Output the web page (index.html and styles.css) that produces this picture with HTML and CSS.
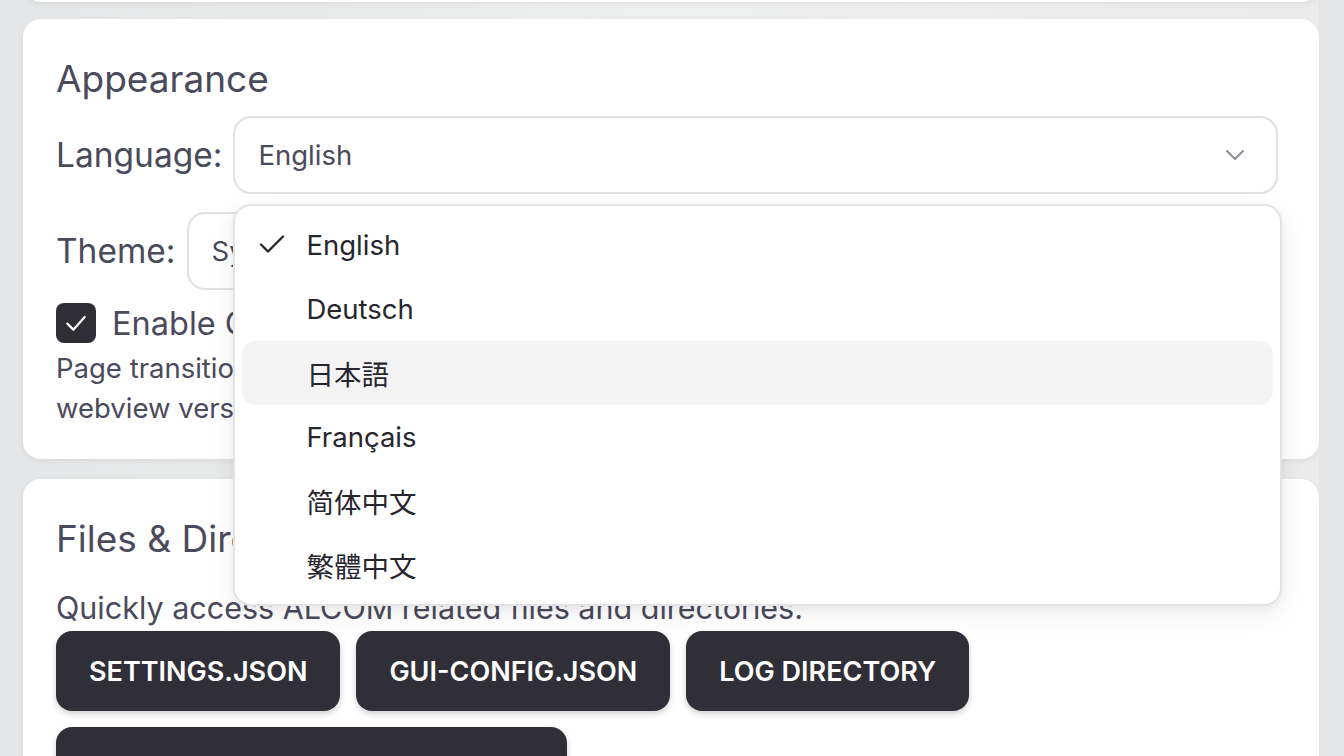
FILE: index.html
```html
<!DOCTYPE html>
<html lang="en">
<head>
<meta charset="utf-8">
<title>Settings</title>
<link rel="stylesheet" href="styles.css">
</head>
<body>
<div class="app">
  <main class="scroller">
    <div class="card card-prev"></div>

    <section class="card">
      <h2 class="card-title">Appearance</h2>

      <div class="field-row">
        <label class="field-label">Language:</label>
        <div class="select-wrap">
          <div class="select">
            <span class="select-value">English</span>
            <svg class="chevron" viewBox="0 0 20 12" width="20" height="12"><path d="M2 2 L10 10 L18 2" fill="none" stroke="currentColor" stroke-width="2" stroke-linecap="round" stroke-linejoin="round"/></svg>
          </div>
          <ul class="menu">
            <li class="menu-item selected">
              <svg class="check" viewBox="0 0 26 20" width="26" height="20"><path d="M2 10.5 L9 17.5 L24 2.5" fill="none" stroke="currentColor" stroke-width="2.4" stroke-linecap="round" stroke-linejoin="round"/></svg>
              English
            </li>
            <li class="menu-item">Deutsch</li>
            <li class="menu-item hover">日本語</li>
            <li class="menu-item">Français</li>
            <li class="menu-item">简体中文</li>
            <li class="menu-item">繁體中文</li>
          </ul>
        </div>
      </div>

      <div class="field-row">
        <label class="field-label">Theme:</label>
        <div class="select-wrap">
          <div class="select">
            <span class="select-value">System</span>
            <svg class="chevron" viewBox="0 0 20 12" width="20" height="12"><path d="M2 2 L10 10 L18 2" fill="none" stroke="currentColor" stroke-width="2" stroke-linecap="round" stroke-linejoin="round"/></svg>
          </div>
        </div>
      </div>

      <div class="check-row">
        <span class="checkbox">
          <svg viewBox="0 0 24 24" width="32" height="32"><path d="M5.5 12.5 L10 17 L18.5 7.5" fill="none" stroke="#fff" stroke-width="1.7" stroke-linecap="round" stroke-linejoin="round"/></svg>
        </span>
        <span class="check-label">Enable GUI Animation</span>
      </div>
      <p class="desc">Page transition animations are enabled. This may cause issues on some</p>
      <p class="desc tight">webview versions.</p>
    </section>

    <section class="card">
      <h2 class="card-title">Files &amp; Directories</h2>
      <p class="lead">Quickly access ALCOM related files and directories.</p>
      <div class="btn-group">
        <button class="btn">settings.json</button>
        <button class="btn">gui-config.json</button>
        <button class="btn">Log Directory</button>
        <button class="btn">Global Packages Directories</button>
      </div>
    </section>
  </main>
  <div class="scrollbar"></div>
</div>
</body>
</html>
```
FILE: styles.css
```css
* { box-sizing: border-box; }

html, body {
  margin: 0;
  height: 100%;
  overflow: hidden;
}

body {
  background: #e5e7e8;
  font-family: Inter, "Noto Sans CJK JP", "Noto Sans CJK SC", sans-serif;
  color: #4a4a5c;
}

.app {
  display: flex;
  height: 756px;
}

.scroller {
  flex: 1;
  display: flex;
  flex-direction: column;
  gap: 20px;
  padding-left: 23px;
  background: linear-gradient(90deg, #e4e6e7 0%, #eeefef 50%, #ebebeb 100%);
}

.scrollbar {
  width: 25px;
  background: #e2e4e5;
}

.card {
  background: #ffffff;
  border-radius: 18px;
  box-shadow: 0 2px 6px rgba(0, 0, 0, 0.06);
  padding: 36px 41px 31px 33px;
}

.card-prev {
  height: 20px;
  margin-top: -18px;
  margin-bottom: -3px;
  padding: 0;
  border-radius: 0 0 18px 18px;
  flex: none;
}

.card-title {
  margin: 0;
  font-size: 37px;
  line-height: 48px;
  font-weight: 400;
  color: #4a4a5c;
}

.field-row {
  display: flex;
  align-items: center;
  gap: 11px;
  margin-top: 13px;
}

.field-row + .field-row {
  margin-top: 18px;
}

.field-label {
  font-size: 33.5px;
  color: #4a4a5c;
  white-space: nowrap;
}

.select-wrap {
  position: relative;
  flex: 1;
}

.select {
  height: 78px;
  border: 2px solid #e1e1e4;
  border-radius: 18px;
  display: flex;
  align-items: center;
  justify-content: space-between;
  padding: 0 31px 0 23px;
  background: #fff;
}

.select-value {
  font-size: 27.5px;
  color: #4a4a5c;
}

.chevron {
  color: #8d8c99;
}

.menu {
  position: absolute;
  top: calc(100% + 10px);
  left: 0;
  right: -4px;
  margin: 0;
  padding: 7px;
  list-style: none;
  background: #fff;
  border: 2px solid #e3e3e6;
  border-radius: 18px;
  box-shadow: 0 8px 24px rgba(0, 0, 0, 0.08), 0 2px 6px rgba(0, 0, 0, 0.04);
  z-index: 10;
}

.menu-item {
  position: relative;
  height: 64px;
  display: flex;
  align-items: center;
  padding-left: 64px;
  font-size: 27.5px;
  color: #27262e;
  border-radius: 14px;
}

.menu-item.hover {
  background: #f3f3f4;
}

.check {
  position: absolute;
  left: 17px;
  top: 21px;
  color: #27262e;
}

.check-row {
  display: flex;
  align-items: center;
  gap: 16px;
  margin-top: 13px;
}

.checkbox {
  width: 40px;
  height: 40px;
  border-radius: 8px;
  background: #2f2e36;
  display: flex;
  align-items: center;
  justify-content: center;
}

.check-label {
  font-size: 32.5px;
  color: #4a4a5c;
}

.desc {
  margin: 5px 0 0;
  font-size: 27.5px;
  line-height: 40px;
  color: #4a4a5c;
  white-space: nowrap;
}

.desc.tight {
  margin-top: 0;
}

.lead {
  margin: 25px 0 0;
  font-size: 30.5px;
  line-height: 40px;
  color: #4a4a5c;
}

.btn-group {
  display: flex;
  flex-wrap: wrap;
  gap: 16px;
  margin-top: 3px;
}

.btn {
  height: 80px;
  padding: 0 33px;
  border: none;
  border-radius: 16px;
  background: #302f37;
  color: #ffffff;
  font-family: Inter, sans-serif;
  font-size: 27px;
  font-weight: 600;
  letter-spacing: 0;
  text-transform: uppercase;
  box-shadow: 0 3px 6px rgba(0, 0, 0, 0.18);
}
```
